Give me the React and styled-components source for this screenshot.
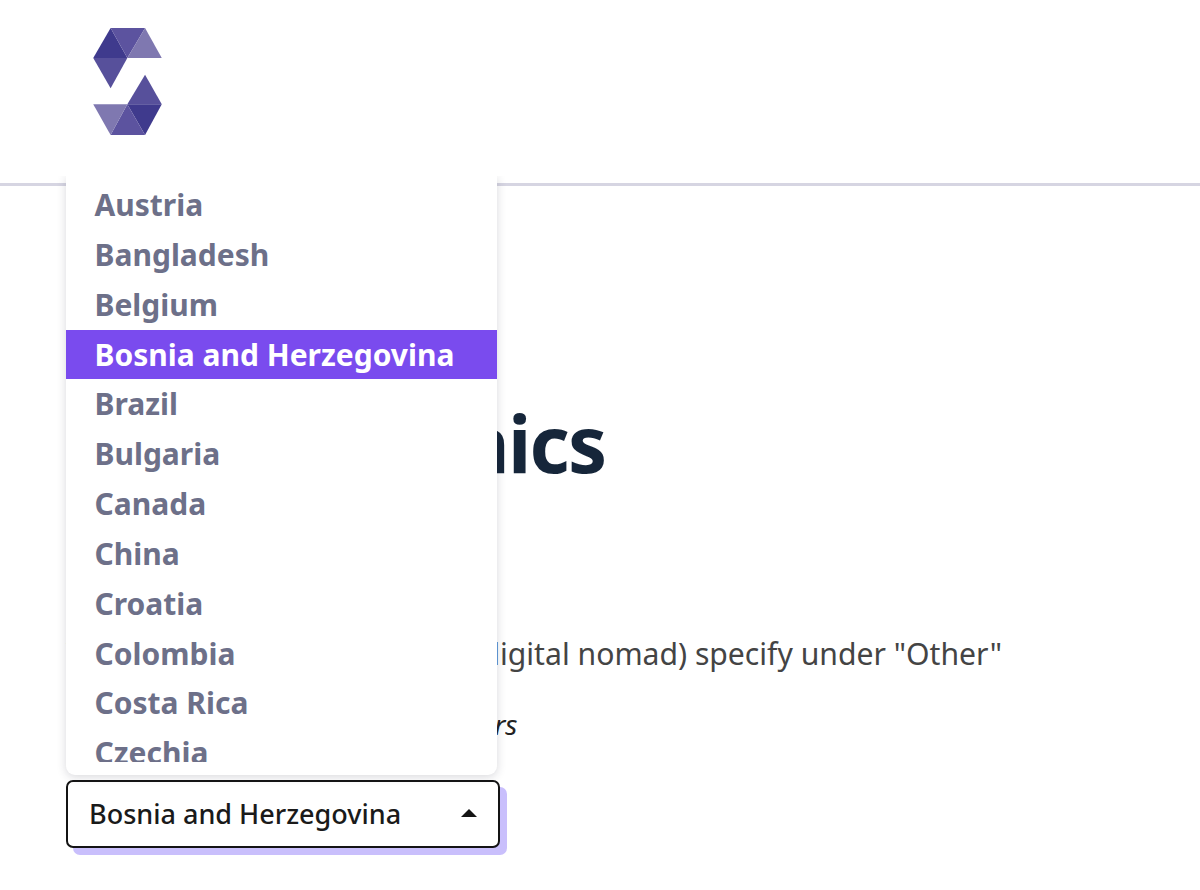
// Survey page with a country select left open

import React from 'react';
import styled, { createGlobalStyle } from 'styled-components';

const GlobalStyle = createGlobalStyle`
  html, body {
    margin: 0;
    padding: 0;
    background: #fff;
    overflow: hidden;
  }
  body {
    font-family: "Noto Sans", "Open Sans", sans-serif;
  }
`;

const Page = styled.div`
  width: 1200px;
  height: 890px;
  overflow: hidden;
`;

// Header with the logo and the rule under it
const Header = styled.header`
  height: 155px;
  padding: 28px 0 0 93px;
  border-bottom: 3px solid #d6d5e2;
`;

const Main = styled.main`
  padding: 0 0 0 66px;
`;

const Title = styled.h1`
  margin: 202px 0 0;
  font-size: 78px;
  line-height: 110px;
  font-weight: 700;
  letter-spacing: -1.75px;
  color: #16263a;
  white-space: nowrap;
`;

const Question = styled.p`
  margin: 135px 0 0;
  font-size: 30.15px;
  line-height: 42px;
  font-weight: 400;
  color: #444;
  white-space: nowrap;
`;

const Hint = styled.p`
  margin: 32px 0 0;
  font-size: 28px;
  line-height: 34px;
  font-style: italic;
  color: #222;
  white-space: nowrap;
`;

// Select and its open menu
const SelectWrap = styled.div`
  position: relative;
  width: 434px;
  margin-top: 39px;
`;

const SelectButton = styled.button`
  display: flex;
  align-items: center;
  justify-content: space-between;
  width: 100%;
  height: 68px;
  padding: 0 21px 2px;
  box-sizing: border-box;
  background: #fff;
  border: 2px solid #141414;
  border-radius: 7px;
  box-shadow: 7px 7px 0 #c9bffc;
  font-family: inherit;
  font-size: 27px;
  font-weight: 500;
  color: #1a1a1a;
`;

const Menu = styled.div`
  position: absolute;
  left: 0;
  bottom: 73px;
  width: 431px;
  height: 599px;
  padding: 4px 0 13px;
  box-sizing: border-box;
  background: #fff;
  border-radius: 0 0 9px 9px;
  box-shadow: 0 2px 10px rgba(40, 40, 60, 0.18);
  clip-path: inset(0 -20px -20px -20px);
`;

const MenuList = styled.ul`
  list-style: none;
  margin: 0;
  padding: 0;
  height: 100%;
  overflow: hidden;
`;

const MenuItem = styled.li`
  height: 49.85px;
  line-height: 49.85px;
  padding-left: 28.5px;
  font-size: 30px;
  font-weight: 700;
  white-space: nowrap;
  color: ${(p) => (p.$selected ? '#fff' : '#6d7089')};
  background: ${(p) => (p.$selected ? '#7a4bee' : 'transparent')};
`;

const countries = [
  'Austria',
  'Bangladesh',
  'Belgium',
  'Bosnia and Herzegovina',
  'Brazil',
  'Bulgaria',
  'Canada',
  'China',
  'Croatia',
  'Colombia',
  'Costa Rica',
  'Czechia',
];

const Logo = () => (
  <svg width="69" height="107" viewBox="98 55 205 320">
    <polygon points="150,55 98,145 200,145" fill="#3f3a8d" />
    <polygon points="150,55 253,55 200,145" fill="#5c539f" />
    <polygon points="253,55 303,145 200,145" fill="#7f78b0" />
    <polygon points="98,145 200,145 150,235" fill="#57509b" />
    <polygon points="253,195 303,283 200,283" fill="#57509b" />
    <polygon points="303,283 200,283 253,375" fill="#3f3a8d" />
    <polygon points="200,283 253,375 150,375" fill="#5c539f" />
    <polygon points="98,283 200,283 150,375" fill="#7f78b0" />
  </svg>
);

const Caret = () => (
  <svg width="16" height="8" viewBox="0 0 16 8">
    <polygon points="8,0 16,8 0,8" fill="#141414" />
  </svg>
);

const App = () => (
  <Page>
    <GlobalStyle />
    <Header>
      <Logo />
    </Header>
    <Main>
      <Title>Demographics</Title>
      <Question>Where do you live? If no (e.g. digital nomad) specify under "Other"</Question>
      <Hint>Please select one of the real answers</Hint>
      <SelectWrap>
        <Menu>
          <MenuList>
            {countries.map((name) => (
              <MenuItem key={name} $selected={name === 'Bosnia and Herzegovina'}>
                {name}
              </MenuItem>
            ))}
          </MenuList>
        </Menu>
        <SelectButton type="button">
          Bosnia and Herzegovina
          <Caret />
        </SelectButton>
      </SelectWrap>
    </Main>
  </Page>
);

export default App;
